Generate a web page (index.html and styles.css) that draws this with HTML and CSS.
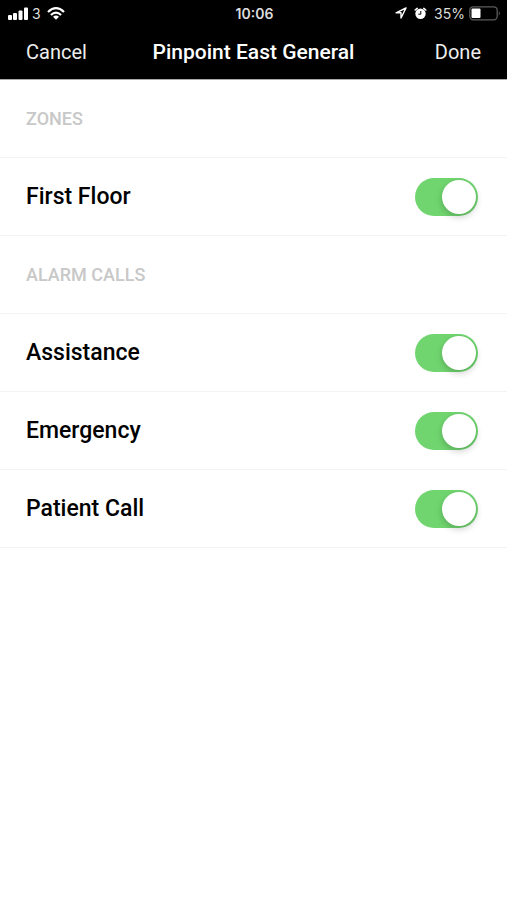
FILE: index.html
```html
<!DOCTYPE html>
<html lang="en">
<head>
  <meta charset="UTF-8" />
  <meta name="viewport" content="width=device-width, initial-scale=1.0" />
  <title>Pinpoint East General</title>
  <link rel="stylesheet" href="styles.css">
</head>

<body>
  <header>
    <div class="status">
      <div class="status-left">
        <svg width="20" height="13" viewBox="0 0 20 13" fill="#fff" aria-hidden="true">
          <rect x="0" y="8" width="4" height="5" rx="1" />
          <rect x="5" y="6" width="4" height="7" rx="1" />
          <rect x="10.5" y="3.5" width="4" height="9.5" rx="1" />
          <rect x="16" y="0.5" width="4" height="12.5" rx="1" />
        </svg>
        <span>3</span>
        <svg class="wifi" width="18" height="13" viewBox="0 0 18 13" aria-hidden="true">
          <g fill="none" stroke="#fff" stroke-width="2.2">
            <path d="M1 5Q9-2.600 17 5" />
            <path d="M3.900 8Q9 3.200 14.100 8" />
          </g>
          <path d="M6 9.800Q9 7.200 12 9.800L9 12.800z" fill="#fff" />
        </svg>
      </div>
      <div class="time">10:06</div>
      <div class="status-right">
        <svg width="12" height="12" viewBox="0 0 12 12" aria-hidden="true">
          <path d="M11 1L1 5.800H6V11z" fill="none" stroke="#fff" stroke-width="1.400" stroke-linejoin="round" />
        </svg>
        <svg class="alarm" width="13" height="13" viewBox="0 0 13 13" aria-hidden="true">
          <circle cx="6.500" cy="6.800" r="5.200" fill="#fff" />
          <path d="M1.200 3L3.200 1.400M11.800 3L9.800 1.400" stroke="#fff" stroke-width="1.600" stroke-linecap="round" />
          <path d="M6.800 4V7.200H4.300" fill="none" stroke="#000" stroke-width="1" />
        </svg>
        <span>35%</span>
        <svg width="32" height="15" viewBox="0 0 32 15" aria-hidden="true">
          <rect x="0.800" y="0.800" width="27.400" height="13" rx="3.500" fill="none" stroke="#5c5c5c" stroke-width="1.300" />
          <rect x="2.500" y="2.500" width="9" height="9.600" rx="1" fill="#fff" />
          <path d="M29.800 5Q32 7.300 29.800 9.600z" fill="#5c5c5c" />
        </svg>
      </div>
    </div>
    <nav>
      <button type="button">Cancel</button>
      <h1>Pinpoint East General</h1>
      <button type="button" class="done">Done</button>
    </nav>
  </header>

  <main>
    <h2>ZONES</h2>
    <div class="row">
      <label for="firstFloor">First Floor</label>
      <input id="firstFloor" type="checkbox" role="switch" checked />
    </div>

    <h2>ALARM CALLS</h2>
    <div class="row">
      <label for="assistance">Assistance</label>
      <input id="assistance" type="checkbox" role="switch" checked />
    </div>
    <div class="row">
      <label for="emergency">Emergency</label>
      <input id="emergency" type="checkbox" role="switch" checked />
    </div>
    <div class="row">
      <label for="patientCall">Patient Call</label>
      <input id="patientCall" type="checkbox" role="switch" checked />
    </div>
  </main>
</body>
</html>
```
FILE: styles.css
```css
:root {
  --on: #70d56f;
  --line: #f3f3f3;
  --muted: #c8c8c8;
}

* {
  box-sizing: border-box;
}

body {
  margin: 0;
  font-family: Roboto, "Noto Sans", sans-serif;
  background: #fff;
  color: #000;
}

header {
  background: #000;
  color: #fff;
  border-bottom: 1px solid #aaa;
}

.status {
  display: grid;
  grid-template-columns: 1fr auto 1fr;
  align-items: center;
  height: 26px;
  padding: 0 6px 0 8px;
  font-family: Inter, "Liberation Sans", sans-serif;
  font-size: 14px;
  color: #ddd;
}

.status-left,
.status-right {
  display: flex;
  align-items: center;
  gap: 4px;
}

.wifi {
  margin-left: 2px;
}

.status-right {
  justify-content: flex-end;
}

.alarm {
  margin: 0 3px;
}

.time {
  font-weight: 600;
}

nav {
  display: grid;
  grid-template-columns: 1fr auto 1fr;
  align-items: center;
  height: 53px;
  padding: 0 26px 2px;
}

button {
  justify-self: start;
  padding: 0;
  border: none;
  background: none;
  color: #eee;
  font-family: inherit;
  font-size: 20px;
  font-weight: 400;
  cursor: pointer;
}

.done {
  justify-self: end;
}

h1 {
  margin: 0;
  font-size: 21px;
  font-weight: 500;
}

h2,
.row {
  display: flex;
  align-items: center;
  height: 78px;
  margin: 0;
  padding: 0 29px 0 26px;
  border-bottom: 1px solid var(--line);
}

h2 {
  font-size: 18px;
  font-weight: 500;
  color: var(--muted);
}

.row {
  justify-content: space-between;
}

label {
  font-size: 23px;
  font-weight: 500;
}

input {
  appearance: none;
  display: flex;
  width: 63px;
  height: 38px;
  margin: 0;
  padding: 2px;
  border-radius: 19px;
  background: #e5e5e5;
  cursor: pointer;
}

input::before {
  content: "";
  width: 34px;
  height: 34px;
  border-radius: 50%;
  background: #fff;
  box-shadow: 0 3px 7px rgba(0, 0, 0, 0.2);
}

input:checked {
  justify-content: flex-end;
  background: var(--on);
}
```
